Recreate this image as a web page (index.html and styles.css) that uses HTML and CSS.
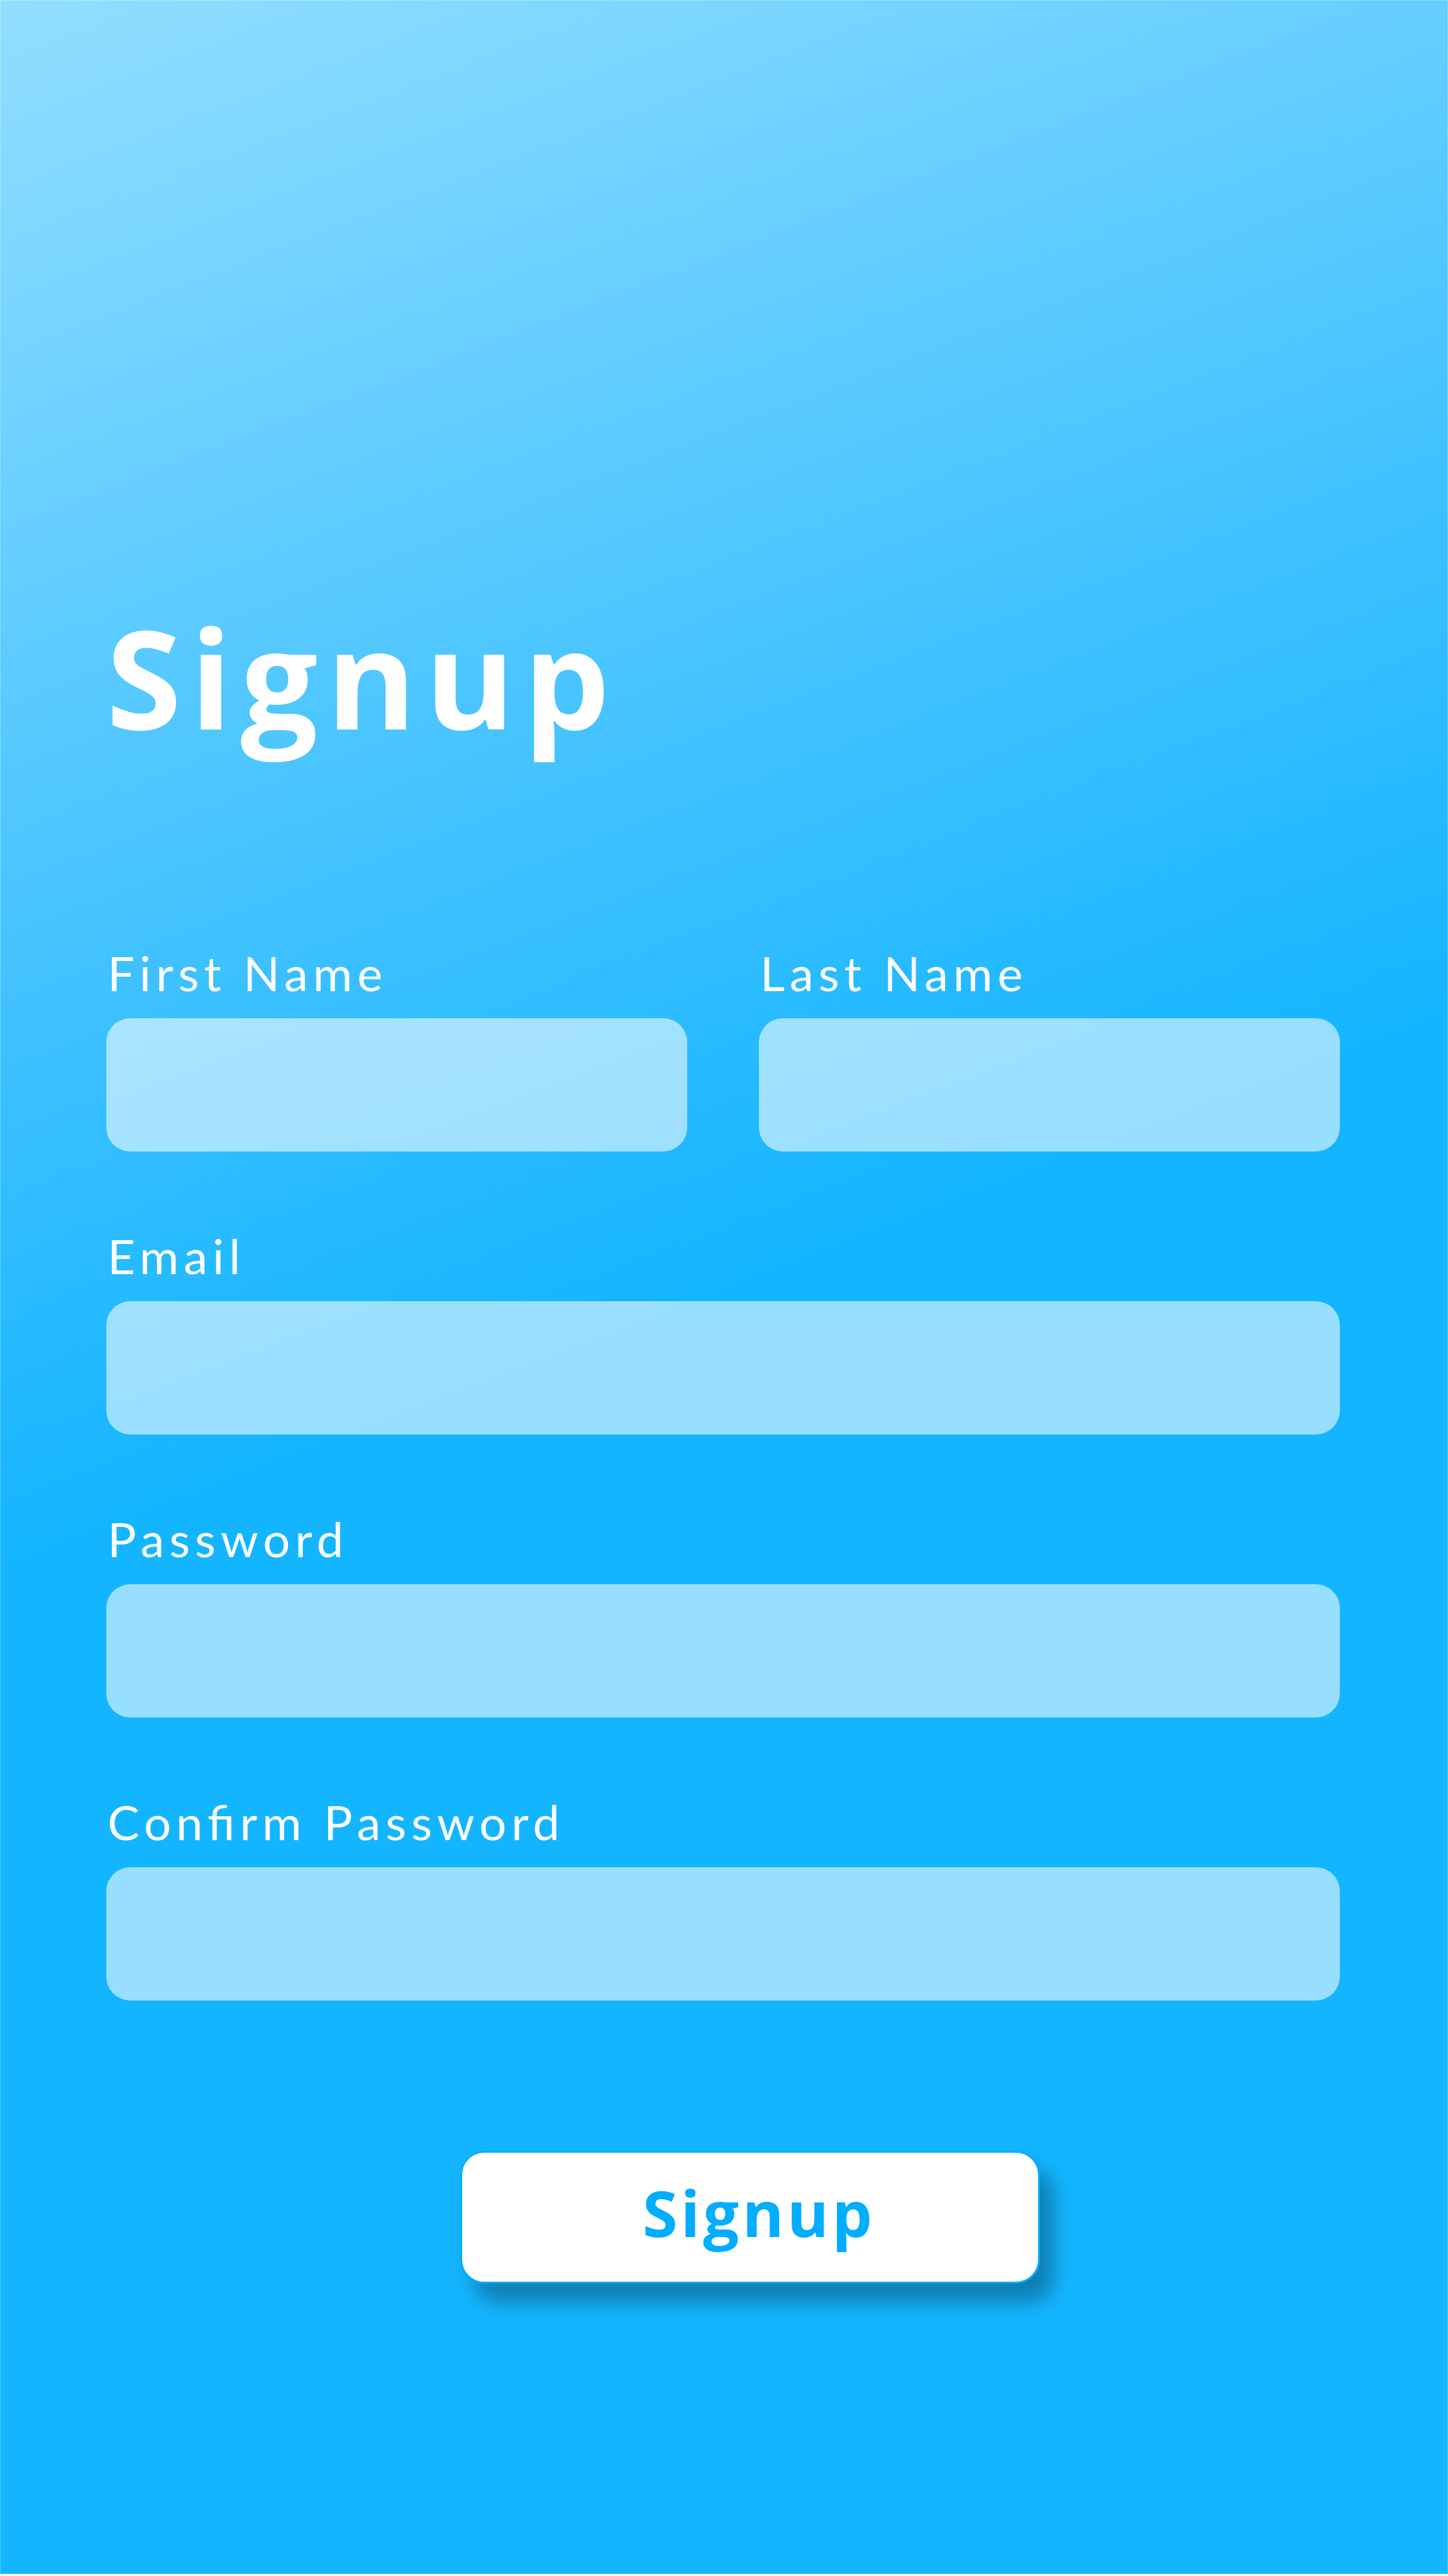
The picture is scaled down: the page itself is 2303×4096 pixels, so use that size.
FILE: index.html
```html
<!DOCTYPE html>
<html lang="en">
<head>
<meta charset="utf-8">
<meta name="viewport" content="width=device-width, initial-scale=1">
<title>Signup</title>
<link rel="stylesheet" href="styles.css">
</head>
<body>
<main class="page">
  <h1 class="title">Signup</h1>
  <form class="form">
    <div class="row">
      <div class="field">
        <label class="label" for="first-name">First Name</label>
        <input class="input" id="first-name" type="text">
      </div>
      <div class="field">
        <label class="label" for="last-name">Last Name</label>
        <input class="input" id="last-name" type="text">
      </div>
    </div>
    <div class="field">
      <label class="label" for="email">Email</label>
      <input class="input" id="email" type="email">
    </div>
    <div class="field">
      <label class="label" for="password">Password</label>
      <input class="input" id="password" type="password">
    </div>
    <div class="field">
      <label class="label" for="confirm-password">Confirm Password</label>
      <input class="input" id="confirm-password" type="password">
    </div>
    <button class="submit" type="submit">Signup</button>
  </form>
</main>
</body>
</html>
```
FILE: styles.css
```css
* {
  box-sizing: border-box;
}

body {
  margin: 0;
  background: #fff;
}

.page {
  min-height: calc(100vh - 3px);
  padding: 926px 172px 240px 169px;
  background: linear-gradient(159deg, #92deff 0%, #3fc1ff 33%, #14b5ff 50%);
  box-shadow: inset 0 0 0 1px rgba(255, 255, 255, 0.3);
  color: #fff;
}

.title {
  margin: 0 0 271px;
  font: 700 217px/300px "Open Sans", sans-serif;
  letter-spacing: 14px;
}

.form {
  display: flex;
  flex-direction: column;
  gap: 116px;
}

.row {
  display: grid;
  grid-template-columns: 1fr 1fr;
  gap: 114px;
}

.field {
  display: flex;
  flex-direction: column;
  gap: 22px;
}

.label {
  padding-left: 2px;
  font: 400 76px/100px Lato, sans-serif;
  letter-spacing: 8px;
  font-feature-settings: "liga" 1;
}

.input {
  width: 100%;
  height: 212px;
  padding: 0 40px;
  border: 0;
  border-radius: 38px;
  background: rgba(255, 255, 255, 0.565);
  color: #0a6fa0;
  font: 400 76px/100px Lato, sans-serif;
}

.submit {
  align-self: center;
  width: 47%;
  height: 211px;
  margin: 123px 0 0 86px;
  padding: 0 0 16px 28px;
  border: 3px solid #00adff;
  border-radius: 38px;
  background: #fff;
  box-shadow: 22px 30px 32px rgba(0, 0, 0, 0.3);
  color: #00adff;
  font: 700 101px/140px "Open Sans", sans-serif;
  letter-spacing: 5px;
}
```
